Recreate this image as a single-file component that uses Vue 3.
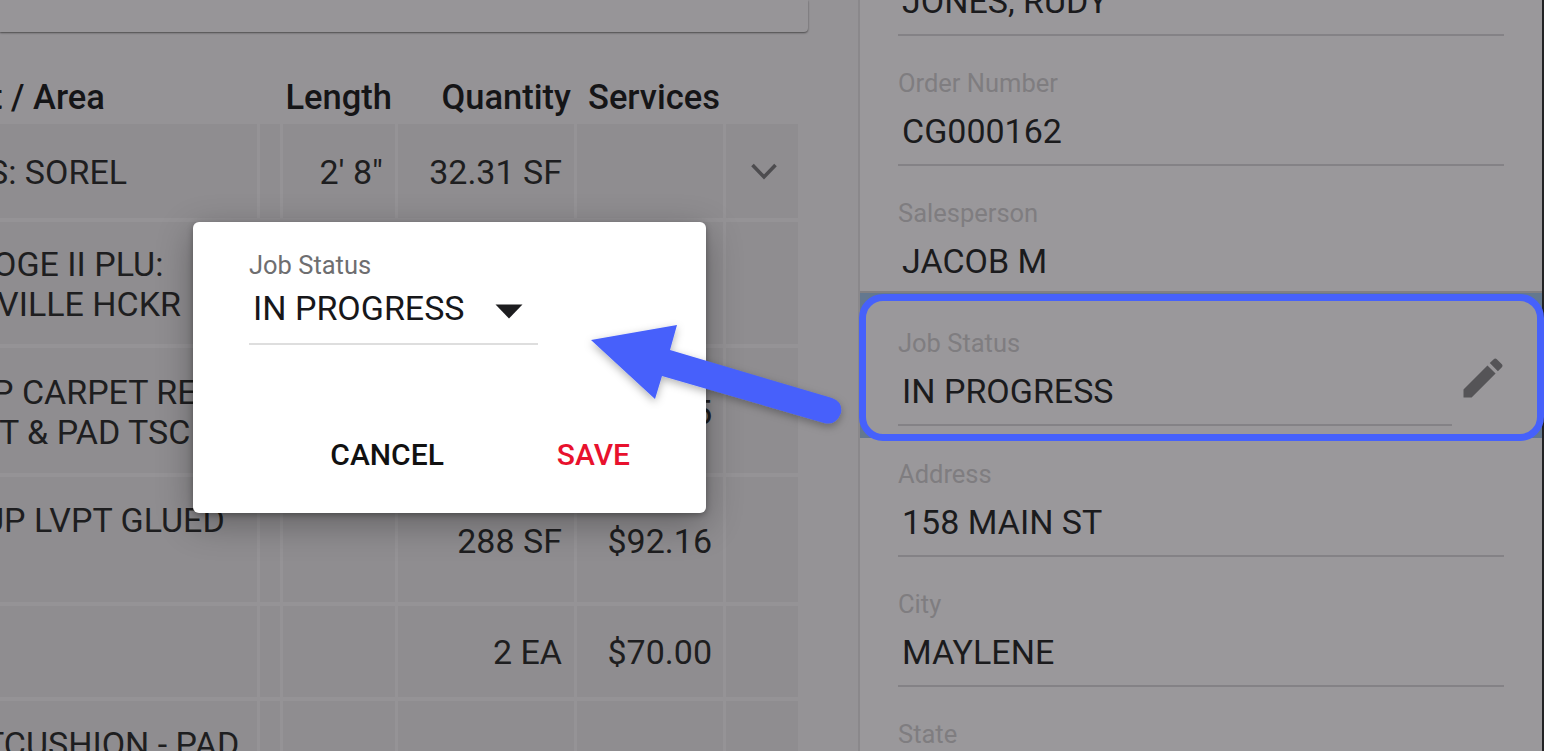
<script setup>
const rows = [
  { h: 94, lines: [{ t: 'S: SOREL', s: -12 }], len: `2' 8"`, qty: '32.31 SF', svc: '', chev: true },
  { h: 122, lines: [{ t: 'OGE II PLU:', s: -7 }, { t: 'VILLE HCKR', s: -3 }], len: '', qty: '', svc: '' },
  { h: 125, lines: [{ t: 'P CARPET RE', s: -8 }, { t: 'T & PAD TSC', s: -1 }], len: '', qty: '', svc: '$48.35' },
  { h: 125, lines: [{ t: 'UP LVPT GLUED', s: -18 }], len: '', qty: '288 SF', svc: '$92.16', topText: true },
  { h: 91, lines: [], len: '', qty: '2 EA', svc: '$70.00', lift: true },
  { h: 125, lines: [{ t: 'TCUSHION - PAD', s: -16 }], len: '', qty: '18 SY', svc: '', topText: true }
]
const fields = [
  { label: 'Customer', value: 'JONES, RUDY' },
  { label: 'Order Number', value: 'CG000162' },
  { label: 'Salesperson', value: 'JACOB M' },
  { label: 'Job Status', value: 'IN PROGRESS', active: true },
  { label: 'Address', value: '158 MAIN ST' },
  { label: 'City', value: 'MAYLENE' },
  { label: 'State', value: 'AL' }
]
</script>

<template>
  <div class="screen">
    <section class="left">
      <div class="card"></div>
      <div class="grid head">
        <div class="hcell area">t / Area</div>
        <div></div>
        <div class="hcell end">Length</div>
        <div class="hcell end">Quantity</div>
        <div class="hcell svc-head">Services</div>
        <div></div>
      </div>
      <div class="grid row" v-for="(r, i) in rows" :key="i" :class="{ lift: r.lift }" :style="{ height: r.h + 'px' }">
        <div class="cell first" :class="{ top: r.topText }">
          <span v-for="l in r.lines" :key="l.t" class="line" :style="{ marginLeft: l.s + 'px' }">{{ l.t }}</span>
        </div>
        <div class="cell"></div>
        <div class="cell num len">{{ r.len }}</div>
        <div class="cell num qty">{{ r.qty }}</div>
        <div class="cell num svc">{{ r.svc }}</div>
        <div class="cell chev">
          <svg v-if="r.chev" width="28" height="18" viewBox="0 0 28 18">
            <path d="M2.5 3 L14 15 L25.5 3" fill="none" stroke="#4d4c4f" stroke-width="3.6" />
          </svg>
        </div>
      </div>
    </section>

    <section class="right">
      <div class="field" v-for="f in fields" :key="f.label" :class="{ active: f.active }">
        <div class="field-body">
          <div class="flabel">{{ f.label }}</div>
          <div class="fvalue">{{ f.value }}</div>
        </div>
        <svg v-if="f.active" class="pencil" width="52" height="52" viewBox="0 0 24 24">
          <path fill="#555457" d="M3 17.25V21h3.75L17.81 9.94l-3.75-3.75L3 17.25zM20.71 7.04c.39-.39.39-1.02 0-1.41l-2.34-2.34c-.39-.39-1.02-.39-1.41 0l-1.83 1.83 3.75 3.75 1.83-1.83z" />
        </svg>
      </div>
    </section>

    <div class="dialog">
      <div class="dlabel">Job Status</div>
      <div class="select">
        <span>IN PROGRESS</span>
        <svg width="28" height="15" viewBox="0 0 28 15"><path d="M0.5 0.5 H27.5 L14 14.5 Z" fill="#1d1d1f" /></svg>
      </div>
      <div class="actions">
        <span class="btn cancel">CANCEL</span>
        <span class="btn save">SAVE</span>
      </div>
    </div>

    <svg class="arrow" width="1544" height="751" viewBox="0 0 1544 751">
      <defs>
        <filter id="sh" x="-20%" y="-20%" width="140%" height="150%">
          <feDropShadow dx="0" dy="3" stdDeviation="4" flood-color="#000" flood-opacity="0.3" />
        </filter>
      </defs>
      <path filter="url(#sh)" fill="#4661fb" d="M591 340 L677 325 L670 350 L832 398 Q843 402 841 413 Q836 426 824 423 L662 376 L655 399 Z" />
    </svg>
  </div>
</template>

<style scoped>
.screen {
  position: relative;
  width: 1544px;
  height: 751px;
  overflow: hidden;
  display: flex;
  font-family: Roboto, "Liberation Sans", sans-serif;
  background: #9a989b;
  color: #1b1b1d;
}
.left {
  width: 858px;
  flex: none;
  background: #959396;
  border-right: 2px solid #8a888b;
  overflow: hidden;
}
.card {
  width: 808px;
  height: 32px;
  background: #979598;
  border-bottom-right-radius: 4px;
  box-shadow: 0 1px 2px rgba(0, 0, 0, .5);
}
.grid {
  display: grid;
  grid-template-columns: 257px 20px 112px 176px 146px 72px;
  column-gap: 3px;
  width: 798px;
}
.head {
  height: 92px;
  padding-top: 37px;
  box-sizing: border-box;
  align-items: center;
}
.hcell {
  font-size: 34.5px;
  font-weight: 500;
  line-height: 48px;
  white-space: nowrap;
  color: #151517;
}
.hcell.end { text-align: right; padding-right: 3px; }
.hcell.area { margin-left: -9px; }
.hcell.svc-head { padding-left: 11px; }
.row { margin-bottom: 4px; }
.cell {
  background: #8f8d90;
  font-size: 34px;
  color: #1e1e20;
  display: flex;
  align-items: center;
  overflow: hidden;
  white-space: nowrap;
}
.first {
  flex-direction: column;
  align-items: flex-start;
  justify-content: center;
  line-height: 40px;
  padding-top: 2px;
  box-sizing: border-box;
}
.first.top { justify-content: flex-start; padding-top: 23px; }
.line { display: block; }
.num { justify-content: flex-end; padding: 2px 12px 0 0; box-sizing: border-box; }
.lift .num { padding-top: 0; }
.svc { padding-right: 11px; }
.chev { justify-content: center; padding-left: 4px; box-sizing: border-box; }
.right {
  flex: 1;
  margin-top: -94px;
  border-right: 2px solid #222224;
}
.field {
  position: relative;
  display: flex;
  align-items: flex-start;
  height: 130px;
  padding: 0 38px;
}
.field.active { z-index: 2; margin-bottom: 1px; }
.field-body {
  flex: 1;
  height: 130px;
  box-sizing: border-box;
  padding-top: 32px;
  border-bottom: 2px solid #848286;
  position: relative;
  z-index: 1;
}
.flabel {
  font-size: 25.5px;
  line-height: 30px;
  color: #7f7d80;
}
.fvalue {
  font-size: 34px;
  line-height: 40px;
  margin: 13px 0 0 4px;
  color: #1b1b1d;
}
.field.active::before {
  content: "";
  position: absolute;
  left: 0;
  right: 0;
  top: -5px;
  bottom: -12px;
  background: #64788f;
  border-top: 2px solid #828083;
}
.field.active::after {
  content: "";
  position: absolute;
  left: -1px;
  right: -2px;
  top: -2px;
  bottom: -15px;
  background: #9a989b;
  border: 7px solid #4661fb;
  border-radius: 24px;
}
.pencil {
  position: relative;
  z-index: 1;
  flex: none;
  margin: 56px -5px 0 5px;
}
.dialog {
  position: absolute;
  left: 193px;
  top: 222px;
  width: 513px;
  height: 291px;
  box-sizing: border-box;
  padding: 28px 76px 0 56px;
  background: #fff;
  border-radius: 6px;
  box-shadow: 0 10px 36px rgba(0, 0, 0, .32), 0 2px 6px rgba(0, 0, 0, .3);
}
.dlabel {
  font-size: 25.5px;
  line-height: 30px;
  color: #6e6e70;
}
.select {
  display: flex;
  align-items: center;
  gap: 30px;
  width: 289px;
  height: 65px;
  padding: 0 0 8px 4px;
  box-sizing: border-box;
  font-size: 34px;
  color: #17171a;
  border-bottom: 2px solid #dedede;
}
.select svg { margin-top: 7px; }
.actions {
  display: flex;
  justify-content: flex-end;
  gap: 113px;
  margin-top: 92px;
}
.btn {
  font-size: 30px;
  font-weight: 500;
  line-height: 36px;
  color: #111;
}
.save { color: #e8112d; }
.arrow {
  position: absolute;
  left: 0;
  top: 0;
  pointer-events: none;
}
</style>
